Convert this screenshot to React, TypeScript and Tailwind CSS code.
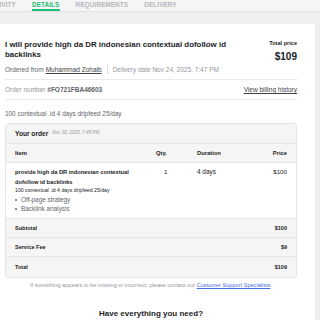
import React from "react";

const tabs = ["ACTIVITY", "DETAILS", "REQUIREMENTS", "DELIVERY"];

export default function App() {
  return (
    <div
      className="w-[320px] h-[320px] overflow-hidden bg-[#efefef] text-[#404145]"
      style={{ fontFamily: '"Liberation Sans", Arial, sans-serif' }}
    >
      {/* Tabs */}
      <div className="h-[12px] bg-[#f5f5f5] border-b border-[#e4e4e4] flex gap-[16px] -ml-[14px] pt-[1px]">
        {tabs.map((t) => (
          <div
            key={t}
            className={
              "text-[6.4px] font-bold tracking-[0.1px] leading-[8px] h-[10px] border-b-2 " +
              (t === "DETAILS" ? "text-[#1dbf73] border-[#1dbf73]" : "text-[#b5b6ba] border-transparent")
            }
          >
            {t}
          </div>
        ))}
      </div>

      {/* Card */}
      <div className="mt-[12px] -ml-[13px] w-[328px] bg-white px-[18px] pt-[16px] pb-[10px]">
        <div className="flex justify-between">
          <div className="w-[226px] text-[7.9px] font-bold leading-[10px] text-[#222325]">
            I will provide high da DR indonesian contextual dofollow id backlinks
          </div>
          <div className="text-right">
            <div className="text-[5.6px] font-bold leading-[7px] text-[#222325]">Total price</div>
            <div className="text-[10px] font-bold leading-[12px] mt-[4px] text-[#222325]">$109</div>
          </div>
        </div>

        <div className="flex items-center mt-[2px] text-[6.5px] leading-[9px] text-[#62646a] pb-[5px] border-b border-[#e9e9e9]">
          <span>Ordered from</span>
          <span className="ml-[2px] underline text-[#404145]">Muhammad Zohaib</span>
          <span className="mx-[5px] h-[9px] w-px bg-[#dadbdd]"></span>
          <span className="text-[#95979d]">Delivery date Nov 24, 2025, 7:47 PM</span>
        </div>

        <div className="flex justify-between items-center py-[5px] text-[6.5px] leading-[9px] border-b border-[#e9e9e9]">
          <div className="text-[#95979d]">
            Order number <span className="font-bold text-[#62646a]">#FO721FBA46603</span>
          </div>
          <div className="underline text-[#404145]">View billing history</div>
        </div>

        <div className="mt-[9px] text-[6.4px] leading-[9px] text-[#62646a]">
          100 contextual .id 4 days dripfeed 25/day
        </div>

        {/* Order table */}
        <div className="mt-[5px] border border-[#e4e5e7] rounded-[3px] overflow-hidden text-[#222325]">
          <div className="bg-[#f5f5f5] h-[20px] flex items-center px-[9px] border-b border-[#e4e5e7]">
            <span className="text-[6.6px] font-bold">Your order</span>
            <span className="ml-[4px] text-[4.6px] italic text-[#95979d]">Nov 30, 2025, 7:45 PM</span>
          </div>
          <div className="bg-[#f5f5f5] h-[19px] flex items-center px-[9px] text-[5.8px] font-bold border-b border-[#e4e5e7]">
            <span className="w-[141px]">Item</span>
            <span className="w-[41px]">Qty.</span>
            <span className="flex-1">Duration</span>
            <span>Price</span>
          </div>
          <div className="flex px-[9px] pt-[4px] pb-[5px] text-[6.2px] border-b border-[#e4e5e7]">
            <div className="w-[141px]">
              <div className="font-bold leading-[10px] text-[5.7px] w-[120px]">
                provide high da DR indonesian contextual dofollow id backlinks
              </div>
              <div className="text-[5.2px] leading-[7px]">100 contextual .id 4 days dripfeed 25/day</div>
              <ul className="mt-[1px] text-[6.4px] leading-[9px] text-[#62646a]">
                <li className="flex items-center gap-[4px]">
                  <span className="w-[2px] h-[2px] bg-[#62646a] rounded-full"></span>Off-page strategy
                </li>
                <li className="flex items-center gap-[4px]">
                  <span className="w-[2px] h-[2px] bg-[#62646a] rounded-full"></span>Backlink analysis
                </li>
              </ul>
            </div>
            <div className="w-[41px] pl-[8px] leading-[10px]">1</div>
            <div className="flex-1 leading-[10px] text-[6.4px]">4 days</div>
            <div className="leading-[10px]">$100</div>
          </div>
          <div className="bg-[#f5f5f5] h-[19px] flex items-center justify-between px-[9px] text-[5.5px] font-bold border-b border-[#e4e5e7]">
            <span>Subtotal</span>
            <span>$100</span>
          </div>
          <div className="bg-[#f5f5f5] h-[19px] flex items-center justify-between px-[9px] text-[5.5px] font-bold border-b border-[#e4e5e7]">
            <span>Service Fee</span>
            <span>$9</span>
          </div>
          <div className="bg-[#f5f5f5] h-[20px] flex items-center justify-between px-[9px] text-[5.5px] font-bold">
            <span>Total</span>
            <span>$109</span>
          </div>
        </div>

        <p className="mt-[4px] text-center text-[5.6px] leading-[7px] text-[#95979d]">
          If something appears to be missing or incorrect, please contact our{" "}
          <span className="underline text-[#446ee7]">Customer Support Specialists</span>.
        </p>

        <h2 className="mt-[20px] text-center text-[8px] font-bold leading-[10px] text-[#222325]">
          Have everything you need?
        </h2>
      </div>
    </div>
  );
}
